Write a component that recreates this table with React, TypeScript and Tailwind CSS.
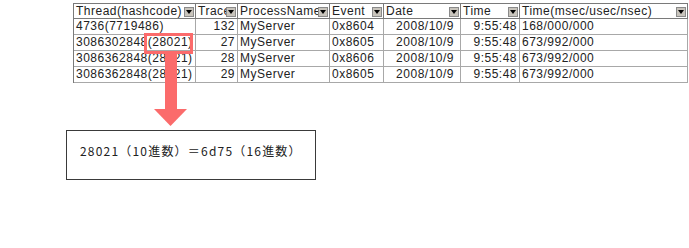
const cols = [
  { name: "Thread(hashcode)", w: "w-[122px]", align: "text-left pl-[2px]" },
  { name: "Trace", w: "w-[42px]", align: "text-right pr-[2px]" },
  { name: "ProcessName", w: "w-[92px]", align: "text-left pl-[2px]" },
  { name: "Event", w: "w-[54px]", align: "text-left pl-[2px]" },
  { name: "Date", w: "w-[77px]", align: "text-right pr-[6px]" },
  { name: "Time", w: "w-[59px]", align: "text-right pr-[2px]" },
  { name: "Time(msec/usec/nsec)", w: "w-[168px]", align: "text-left pl-[2px]" },
]

const rows = [
  ["4736(7719486)", "132", "MyServer", "0x8604", "2008/10/9", "9:55:48", "168/000/000"],
  ["3086302848(28021)", "27", "MyServer", "0x8605", "2008/10/9", "9:55:48", "673/992/000"],
  ["3086362848(28021)", "28", "MyServer", "0x8606", "2008/10/9", "9:55:48", "673/992/000"],
  ["3086362848(28021)", "29", "MyServer", "0x8605", "2008/10/9", "9:55:48", "673/992/000"],
]

function FilterButton() {
  return (
    <span className="absolute right-[1px] top-[3px] w-[10px] h-[10px] bg-[#c8c4bc] border border-[#8a8a8a] flex items-center justify-center">
      <svg width="6" height="4" viewBox="0 0 6 4">
        <polygon points="0,0 6,0 3,4" fill="#000" />
      </svg>
    </span>
  )
}

export default function App() {
  return (
    <div className="relative w-[689px] h-[248px] bg-white overflow-hidden" style={{ fontFamily: '"Liberation Sans", "Noto Sans CJK JP", sans-serif' }}>
      <div className="pt-[3px] pl-[73px]">
        {/* --- sheet --- */}
        <div className="w-[615px] border-t border-l border-[#7a7a7a] text-[12px] leading-[15px] text-[#222] tracking-[0.5px]">
          <div className="flex h-[15px]">
            {cols.map(c => (
              <div key={c.name} className={`${c.w} relative overflow-hidden whitespace-nowrap border-r border-b border-[#7a7a7a] pl-[2px]`}>
                {c.name}
                <FilterButton />
              </div>
            ))}
          </div>
          {rows.map((r, i) => (
            <div key={i} className="flex h-[16px]">
              {r.map((v, j) => (
                <div key={j} className={`${cols[j].w} ${cols[j].align} overflow-hidden whitespace-nowrap border-r border-b border-[#a8a8a8] leading-[15px]`}>
                  {v}
                </div>
              ))}
            </div>
          ))}
        </div>

        {/* --- note box --- */}
        <div className="mt-[47px] -ml-[7px] w-[250px] h-[50px] border border-[#3a3a3a] flex items-center pl-[13px] pb-[9px]">
          <span className="text-[12px] text-[#222] tracking-[1.2px]" style={{ fontFamily: '"Noto Sans CJK JP", monospace' }}>
            28021（10進数）＝6d75（16進数）
          </span>
        </div>
      </div>

      {/* --- highlight + arrow overlay --- */}
      <svg className="absolute left-0 top-0" width="689" height="248">
        <rect x="145.5" y="34.5" width="46" height="18" fill="none" stroke="#fb6b6b" strokeWidth="3" />
        <rect x="165" y="53" width="12" height="57" fill="#fb6b6b" />
        <polygon points="154,109 187,109 170.5,126" fill="#fb6b6b" />
      </svg>
    </div>
  )
}
